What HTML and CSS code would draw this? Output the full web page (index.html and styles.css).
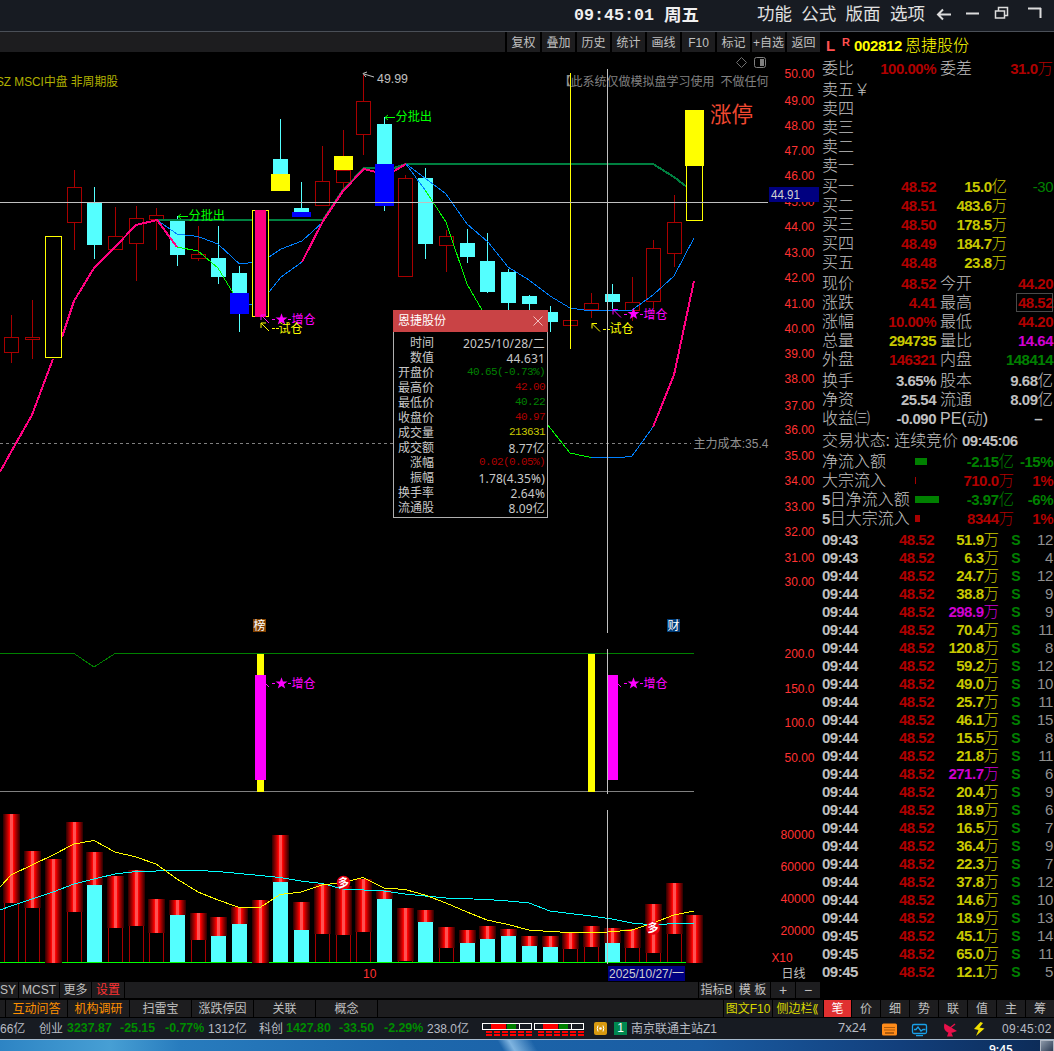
FILE: index.html
```
<!DOCTYPE html>
<html lang="zh-CN">
<head>
<meta charset="utf-8">
<title>恩捷股份 002812</title>
<link rel="stylesheet" href="styles.css">
</head>
<body>
<header class="titlebar">
  <div class="clock"><span class="clock-time">09:45:01</span><span class="clock-day">周五</span></div>
  <nav class="menu"><span>功能</span><span>公式</span><span>版面</span><span>选项</span></nav>
  <svg class="winbtns" width="119" height="31" viewBox="935 0 119 31" fill="none" stroke="#dcdcdc" stroke-width="2">
    <path d="M951 14.500H938M943 9.500L938 14.500L943 19.500M966 13.500H979"/>
    <path stroke-width="1.500" d="M998.500 10.500V7.500H1007.500V15.500H1005M995.500 11H1004.500V18H995.500Z"/>
    <path stroke-width="2" d="M1028 8.500H1041M1040.500 8V18"/>
  </svg>
</header>
<main class="main">
  <section class="left">
    <div class="toolbar"><i class="fill"></i><b>复权</b><b>叠加</b><b>历史</b><b>统计</b><b>画线</b><b>F10</b><b>标记</b><b>+自选</b><b>返回</b></div>
    <div class="chart-wrap">
      <svg id="chart" width="820" height="930" viewBox="0 52 820 930">
        <defs>
          <linearGradient id="vol" x1="0" x2="1" y1="0" y2="0">
            <stop offset="0" stop-color="#2a0000"/><stop offset=".22" stop-color="#a00000"/><stop offset=".38" stop-color="#ff0000"/>
            <stop offset=".42" stop-color="#ff5050"/><stop offset=".58" stop-color="#ff5050"/><stop offset=".62" stop-color="#ff0000"/>
            <stop offset=".78" stop-color="#a00000"/><stop offset="1" stop-color="#2a0000"/>
          </linearGradient>
        </defs>
      </svg>
      <div class="tip">
        <div class="tip-head"><span>恩捷股份</span><svg width="10" height="10" viewBox="0 0 10 10"><path d="M.5.5L9.500 9.500M9.500.5L.5 9.500" stroke="#f0c0c0" stroke-width="1"/></svg></div>
        <dl class="tip-body">
          <dt>时间</dt><dd>2025/10/28/二</dd>
          <dt>数值</dt><dd>44.631</dd>
          <dt>开盘价</dt><dd class="mono green">40.65(-0.73%)</dd>
          <dt>最高价</dt><dd class="mono red">42.00</dd>
          <dt>最低价</dt><dd class="mono green">40.22</dd>
          <dt>收盘价</dt><dd class="mono red">40.97</dd>
          <dt>成交量</dt><dd class="mono yellow">213631</dd>
          <dt>成交额</dt><dd>8.77亿</dd>
          <dt>涨幅</dt><dd class="mono red">0.02(0.05%)</dd>
          <dt>振幅</dt><dd>1.78(4.35%)</dd>
          <dt>换手率</dt><dd>2.64%</dd>
          <dt>流通股</dt><dd>8.09亿</dd>
        </dl>
      </div>
    </div>
    <div class="tabs tabs-a"><b class="sy">SY</b><b class="mcst">MCST</b><b class="more">更多</b><b class="set">设置</b><b class="fill"></b><b class="ind">指标B</b><b class="tpl">模 板</b><b class="pm">+</b><b class="pm">−</b></div>
  </section>
  <aside class="quote">
    <div class="q-head"><span class="q-l">L</span><sup>R</sup><span class="q-code">002812</span><span class="q-name">恩捷股份</span></div>
    <div id="quote"></div>
    <div id="ticks"></div>
  </aside>
</main>
<div class="tabs tabs-b">
  <b class="stub"></b><b class="w orange">互动问答</b><b class="w orange">机构调研</b><b class="w">扫雷宝</b><b class="w">涨跌停因</b><b class="w">关联</b><b class="w">概念</b><b class="fill"></b><b class="f10">图文F10</b><b class="side">侧边栏⟪</b>
  <b class="k on">笔</b><b class="k">价</b><b class="k">细</b><b class="k">势</b><b class="k">联</b><b class="k">值</b><b class="k">主</b><b class="k">筹</b>
</div>
<footer class="status">
  <span class="s-first">66亿</span><span class="s-n1">创业</span><em class="e1">3237.87</em><em class="e2">-25.15</em><em class="e3">-0.77%</em><span class="s-v1">1312亿</span>
  <span class="s-n2">科创</span><em class="e1">1427.80</em><em class="e2">-33.50</em><em class="e3">-2.29%</em><span class="s-v2">238.0亿</span>
  <svg class="meters" width="102" height="14" viewBox="482 1022 102 14"><g id="meters"></g></svg>
  <svg class="sig" width="13" height="13" viewBox="0 0 13 13"><rect width="13" height="13" rx="2" fill="#d89a10"/><circle cx="6.500" cy="6.500" r="1.300" fill="#fff"/><path d="M4 3.500Q2.500 6.500 4 9.500M9 3.500Q10.500 6.500 9 9.500" stroke="#fff" fill="none"/></svg>
  <span class="num">1</span><span class="host">南京联通主站Z1</span>
  <span class="s724">7x24</span>
  <svg class="icons" width="106" height="16" viewBox="881 1020 106 16">
    <rect x="882" y="1022.500" width="15" height="12" rx="1.500" fill="#ff8c1a"/><path d="M884.500 1026.500H895M884.500 1029H895" stroke="#5a2a00" stroke-dasharray="1 1"/><path d="M885 1032H894" stroke="#5a2a00"/>
    <g fill="none" stroke="#18a0e8" stroke-width="1.300"><rect x="912.500" y="1023.500" width="14" height="9" rx="1.500"/><path d="M914 1028.500H916L918 1026L921 1030L923 1028.500H925.500M916 1034.700H923"/></g>
    <path d="M944.500 1022.500C942.500 1029 947 1033 953 1031.500L957 1030ZM949 1030L947 1035.500H953L951 1031Z" fill="#e8104a"/><path d="M950 1027L955 1023" stroke="#e8104a" stroke-width="1.500"/>
    <path d="M980.500 1021L974 1028L978.500 1029L976 1035L984.500 1027.500L979.500 1026.500L983 1022Z" fill="#f0e000"/>
  </svg>
  <span class="s-time">09:45:02</span>
</footer>
<div class="taskbar"><span>9:45</span><i></i></div>
<script src="app.js"></script>
</body>
</html>
```
FILE: styles.css
```
* { box-sizing: border-box; }
html, body { margin: 0; background: #000; }
body {
  width: 1054px; height: 1051px; overflow: hidden; color: #c0c0c0;
  font: 400 12px/1 "Liberation Sans", "Noto Sans CJK SC", sans-serif;
  display: flex; flex-direction: column; white-space: nowrap;
}
b, em, i { font-style: normal; font-weight: inherit; }

.titlebar { height: 32px; flex: none; display: flex; background: #171b22; border-bottom: 1px solid #4a4f57; }
.clock { margin-left: 574px; width: 183px; display: flex; color: #f0f0f0; font-weight: 700; line-height: 31px; }
.clock-time { font-family: "Liberation Mono", monospace; font-size: 16.700px; width: 90px; }
.clock-day { font-size: 17.500px; line-height: 30px; }
.menu { width: 178px; display: flex; gap: 9.300px; font-size: 17.500px; font-weight: 400; line-height: 29px; color: #e0e0e0; }

.main { display: flex; height: 968px; flex: none; }
.left { width: 820px; display: flex; flex-direction: column; }
.toolbar { height: 20px; display: flex; gap: 2px; flex: none; }
.toolbar b, .toolbar i { background: #1d1d1f; width: 33px; text-align: center; line-height: 22px; overflow: hidden; }
.toolbar .fill { width: auto; flex: 1; }
.chart-wrap { position: relative; height: 930px; flex: none; }
#chart { display: block; shape-rendering: crispEdges; }
#chart text { white-space: pre; }

.tip { position: absolute; left: 393px; top: 258px; width: 155px; height: 208px; background: #000; border: 1px solid #b0b0b0; border-top: 0; }
.tip-head { height: 22px; margin: 0 -1px; padding: 0 5px; background: #c94345; color: #fff; display: flex; align-items: center; justify-content: space-between; }
.tip-body { margin: 4px 0 0; padding: 0 2px 0 4px; display: grid; grid-template-columns: 36px 1fr; grid-auto-rows: 15px; line-height: 15px; text-align: right; }
.tip-body dt, .tip-body dd { margin: 0; font-weight: 400; color: #c8c8c8; }
.tip-body dd { font-family: "Noto Sans", "Noto Sans CJK SC", sans-serif; letter-spacing: .15px; }
.tip-body dd.mono { font-family: "Liberation Mono", monospace; font-size: 11px; letter-spacing: -.6px; line-height: 13px; }
.tip-body dd.green, .green { color: #008000; }
.tip-body dd.red, .red { color: #b00000; }
.tip-body dd.yellow, .yellow { color: #c8c800; }

.tabs { display: flex; gap: 1px; flex: none; }
.tabs b { background: #1d1d1f; text-align: center; overflow: hidden; }
.tabs .fill { flex: 1; }
.tabs-a { height: 16px; line-height: 16px; }
.tabs-a .sy { width: 18px; text-align: left; }
.tabs-a .mcst { width: 40px; } .tabs-a .more { width: 31px; } .tabs-a .set { width: 32px; color: #ff3232; font-weight: 400; }
.tabs-a .ind { width: 35px; } .tabs-a .tpl { width: 35px; } .tabs-a .pm { width: 24px; font-size: 14px; }
.tabs-b { height: 18px; padding-bottom: 1px; line-height: 19px; }
.tabs-b .stub { width: 5px; } .tabs-b .w { width: 61px; }
.tabs-b .orange { color: #ff9000; font-weight: 400; }
.tabs-b .f10 { width: 48px; color: #d8d800; } .tabs-b .side { width: 50px; color: #d8d800; }
.tabs-b .k { width: 28px; } .tabs-b .k.on { background: #e03030; color: #fff; width: 27px; }

.quote { width: 234px; overflow: hidden; font-size: 16px; font-weight: 300; }
.q-head { height: 27px; display: flex; line-height: 27px; color: #ff0; }
.q-l { width: 22px; padding-left: 6px; color: #ff5050; font-size: 15px; font-weight: 700; }
.q-head sup { width: 12px; color: #ff5050; font-size: 11px; font-weight: 700; line-height: 20px; vertical-align: baseline; }
.q-code { width: 51px; font-size: 15px; font-weight: 700; letter-spacing: -.35px; }
.row { display: grid; height: 19px; line-height: 19px; align-items: center; grid-template-columns: 57px 59px 4px 46px 67px; padding-left: 0; }
.row > span { height: 19px; overflow: visible; }
.row .lab { padding-left: 2px; }
.gap { margin-top: 2px; }
.num-v { font-size: 15px; letter-spacing: -.5px; font-weight: 700; text-align: right; }
.num-v u { text-decoration: none; font-weight: 300; font-size: 15.500px; line-height: 1; letter-spacing: 0; }
.white { color: #c0c0c0; } .mag { color: #d000d0; }
.book { grid-template-columns: 57px 59px 71px 46px; }
.boxed { outline: 1px solid #4a4a4a; outline-offset: -1px; margin-left: 30px; }
.state { height: 19px; line-height: 19px; margin-top: 3px; padding-left: 2px; letter-spacing: -.1px; }
.state span { font-size: 15px; letter-spacing: -.55px; font-weight: 700; margin-left: 4px; }
.state { display: flex; }
.flow { grid-template-columns: 95px 24px 75px 39px; }
.flow .bar { height: 7px; display: block; }
.flow .lab b { font-weight: 700; font-size: 15px; letter-spacing: -.5px; }
#ticks { margin-top: 3px; }
.tick { display: grid; height: 18px; line-height: 18px; grid-template-columns: 57px 57px 65px 25px 29px; }
.tick > span { height: 18px; }
.tick .t { padding-left: 2px; text-align: left; }
.tick .s { font-weight: 700; color: #008000; font-size: 14px; text-align: center; padding-left: 9px; }
.tick .c { font-size: 15px; letter-spacing: -.4px; text-align: right; color: #909090; font-weight: 400; }

.status { height: 21px; flex: none; display: flex; align-items: center; background: #171b22; color: #b8bcc4; }
.status em { color: #008c00; font-weight: 700; font-size: 12.400px; }
.s-first { width: 39px; } .s-n1 { width: 28px; } .s-n2 { width: 27px; }
.status .e1 { width: 53px; } .status .e2 { width: 45px; } .status .e3 { width: 43px; }
.s-v1 { width: 51px; } .s-v2 { width: 55px; }
.meters { margin-right: 10px; }
.sig { margin-right: 7px; }
.num { width: 13px; height: 13px; margin-right: 4px; background: #008850; color: #fff; text-align: center; line-height: 13px; }
.host { width: 207px; }
.s724 { width: 43px; font-family: "Noto Sans", sans-serif; font-size: 12.500px; }
.icons { margin-right: 15px; }
.s-time { letter-spacing: .4px; }
.taskbar { height: 12px; flex: none; position: relative; border-top: 1px solid #a8bccf; overflow: hidden;
  background: linear-gradient(60deg, transparent 436px, #7fb4e0 446px, transparent 466px), linear-gradient(90deg, #2d84c4, #479fd4 110px, #287cbe 180px, #1d68ad 400px, #1a5ca2 700px, #123f7c 900px, #0c2a55); }
.taskbar span { position: absolute; left: 989px; top: 4px; color: #fff; font: 600 12px/1 "Open Sans", sans-serif; }
.taskbar i { position: absolute; right: 0; top: 0; width: 14px; height: 12px; background: linear-gradient(135deg, #8c98a8, #2c3c54); border: 1px solid #b0b8c4; }
```
FILE: app.js
```
const NS = 'http://www.w3.org/2000/svg';
const chart = document.getElementById('chart');

function el(name, attrs, parent = chart) {
  const node = document.createElementNS(NS, name);
  for (const k in attrs) node.setAttribute(k, attrs[k]);
  parent.appendChild(node);
  return node;
}
const rect = (x, y, w, h, fill, parent) => el('rect', { x, y, width: w, height: h, fill }, parent);
const box = (x, y, w, h, stroke, fill = 'none') => el('rect', { x, y, width: w, height: h, fill, stroke });
const line = (pts, stroke, w = 1, extra = {}) => el('polyline', { points: pts, fill: 'none', stroke, 'stroke-width': w, ...extra });
const text = (x, y, s, fill, size = 12, width, extra = {}) => {
  const a = { x, y, fill, 'font-size': size, ...extra };
  if (width) { a.textLength = width; a.lengthAdjust = 'spacingAndGlyphs'; }
  el('text', a).textContent = s;
};

const RED = '#a80000', CYAN = '#54ffff', PINK = '#ff0080', BLUE = '#0080ff', LIME = '#00ff00', GREEN = '#008040';
const X = [11.5, 32.5, 53.5, 74.5, 94.5, 115.5, 136.5, 156.5, 177.5, 198.5, 218.5, 239.5, 260.5, 280.5, 301.5, 322.5, 343.5,
  363.5, 384.5, 405.5, 425.5, 446.5, 467.5, 487.5, 508.5, 529.5, 550.5, 570.5, 591.5, 612.5, 632.5, 653.5, 674.5, 694.5];

/* index, kind, high, body top, body bottom, low */
const candles = [
  [0, 'r', 315, 337.5, 352.5, 363], [1, 'r', 300, 337.5, 339.5, 359], [3, 'r', 170, 187.5, 222.5, 250],
  [4, 'c', 187, 203, 245, 259], [5, 'r', 207, 236.5, 249.5, 249], [6, 'r', 206, 218.5, 243.5, 281],
  [7, 'r', 208, 215.5, 219.5, 250], [8, 'c', 216, 221, 255, 266], [9, 'r', 226, 254.5, 258.5, 261],
  [10, 'c', 226, 258, 277, 284], [11, 'c', 266, 273, 293, 332], [13, 'c', 119, 159, 174, 174],
  [14, 'c', 182, 208, 212, 212], [15, 'r', 146, 181.5, 205.5, 205], [16, 'r', 130, 170.5, 182.5, 190],
  [17, 'r', 75, 101.5, 134.5, 155], [18, 'c', 117, 124, 164, 211], [19, 'r', 175, 178.5, 276.5, 276],
  [20, 'c', 168, 178, 244, 259], [21, 'r', 230, 236.5, 245.5, 272], [22, 'c', 229, 243, 257, 263],
  [23, 'c', 233, 261, 292, 293], [24, 'c', 269, 272, 303, 310], [25, 'c', 295, 296, 304, 310],
  [26, 'c', 306, 312, 322, 332], [27, 'r', 320, 320.5, 325.5, 325], [28, 'r', 293, 303.5, 309.5, 318],
  [29, 'c', 284, 294, 302, 309], [30, 'r', 277, 302.5, 310.5, 321], [31, 'r', 240, 248.5, 301.5, 308],
  [32, 'r', 195, 222.5, 253.5, 267]];
for (const [i, kind, hi, top, bot, lo] of candles) {
  const x = X[i];
  if (kind === 'c') {
    rect(x - .5, hi, 1, lo - hi, CYAN);
    rect(x - 7.5, top, 15, bot - top, CYAN);
  } else {
    rect(x - .5, hi, 1, Math.max(0, top - hi), RED);
    rect(x - .5, bot, 1, Math.max(0, lo - bot), RED);
    box(x - 7, top, 14, bot - top, RED);
  }
}
text(-4, 85.5, 'SZ MSCI中盘 非周期股', '#b0b000', 12, 122);
text(559, 85.5, '【', '#909090', 12, 0, { 'font-weight': 700 });
text(570.5, 85.5, '此系统仅做模拟盘学习使用', '#808080', 12, 144);
text(720.5, 85.5, '不做任何', '#808080', 12, 48);

/* price indicators */
line('157,220 323,220 343,190 364,168 394,168 406,164 653,164 674,177 687,187', GREEN, 2);
line('157,220 177,234 198,236.5 218,244 239,263.5 245,263.5 252,262.5', BLUE);
line('269,257 281,249 302,241 323,222', BLUE);
line('249,304.500 252,304.500', BLUE);
line('269,292 281,277 302,262', BLUE);
line('0,472 11,452 32,415 53,359', PINK, 2);
line('62,337 74,301 94,268 115,247 136,225 157,220 177,247', PINK, 2);
line('177,247 198,251 218,268 233,293', LIME);
line('302,262 323,221 343,191 364,169 376,172 394,171 406,164', PINK, 2);
line('406,164 425,178 446,194 467,224 488,242 508,267 529,280 550,296 570,308 591,311 612,310.5 632,310 653,295 674,276 694,238', BLUE);
line('406,164 425,190', BLUE);
line('425,190 446,222 467,284 482,310', LIME);
line('547,424 570,453 591,457.5', LIME);
line('591,457.5 622,457.5 632,456 653,427', BLUE);
line('653,427 674,375 694,281', PINK, 2);

/* signal blocks */
box(45.5, 236.5, 16, 121, '#ff0', '#000');
rect(230, 293, 19, 21, '#00f');
box(252.5, 210.5, 16, 106, '#ff0', '#000');
rect(255, 210, 11, 107, PINK);
rect(271, 174, 19, 17, '#ff0');
rect(292, 212, 19, 5, '#00f');
rect(334, 156, 19, 14, '#ff0');
rect(375, 164, 19, 42, '#00f');
rect(570, 73, 1, 276, '#ff0');
rect(685, 110, 19, 56, '#ff0');
box(686.5, 165.500, 16, 55, '#ff0');

/* arrows and captions */
const aa = { 'shape-rendering': 'auto' };
line('188,216.500 178,216.500', LIME); line('181,214 178,216.500 181,219', LIME, 1, aa);
text(188.500, 219.500, '分批出', LIME, 12.200);
line('395,117.500 385,117.500', LIME); line('388,115 385,117.500 388,120', LIME, 1, aa);
text(395.500, 121, '分批出', LIME, 12.200);
line('374,77 364,74', '#c0c0c0', 1, aa); line('367,72 363,73.500 366,77', '#c0c0c0', 1, aa);
text(377, 83, '49.99', '#c0c0c0', 12.500, 31);
const diag = (x, y, c) => { line(`${x + 8},${y + 8} ${x},${y}`, c, 1, aa); line(`${x + 5},${y} ${x},${y} ${x},${y + 5}`, c, 1, aa); };
function add(x, y, full = true) {
  if (full) diag(x, y, '#f0f'); else line(`${x + 5},${y + 5} ${x + 8},${y + 8}`, '#f0f', 1, aa);
  rect(x + 11, y + 4, 3, 1, '#f0f');
  const cx = x + 20.500, cy = y + 4.500;
  let p = '';
  for (let k = 0; k < 10; k++) {
    const r = k % 2 ? 2.500 : 6.300, a = -Math.PI / 2 + k * Math.PI / 5;
    p += `${cx + r * Math.cos(a)},${cy + r * Math.sin(a)} `;
  }
  el('polygon', { points: p, fill: '#f0f', ...aa });
  rect(x + 27, y + 4, 3, 1, '#f0f');
  text(x + 30.500, y + 9, '增仓', '#f0f', 12);
}
const probe = (x, y) => { diag(x, y, '#ff0'); rect(x + 11, y + 5, 3, 1, '#ff0'); rect(x + 15, y + 5, 3, 1, '#ff0'); text(x + 17.500, y + 9.500, '试仓', '#ff0', 12); };
add(261, 315); probe(261, 323); add(613, 309.500); probe(592, 323.500);
text(710, 121.500, '涨停', '#f04830', 21.500, 43, { 'font-weight': 400 });
line('741.5,57.5 746.5,62.5 741.5,67.5 736.5,62.5 741.5,57.5', '#707070', 1, aa);
el('rect', { x: 754.5, y: 57.5, width: 11, height: 10, rx: 2, fill: 'none', stroke: '#808080', ...aa });
rect(760, 59, 4, 7, '#808080');

line('0,443.5 691,443.5', '#808080', 1, { 'stroke-dasharray': '3 3' });
text(693.5, 447.500, '主力成本:35.4', '#909090', 12, 75);
rect(253, 619, 13, 13, '#804000'); text(253.500, 630, '榜', '#fff', 12);
rect(667, 619, 13, 13, '#003c78'); text(667.500, 630, '财', '#fff', 12);

/* signal pane */
line('0,653.5 74,653.5 94,667 115,653.5 694,653.5', '#008000');
rect(0, 791, 694, 1, '#808080');
rect(257, 654, 7, 138, '#ff0'); rect(588, 654, 7, 138, '#ff0');
rect(255, 675, 11, 105, '#f0f');

/* top, gradient bottom, kind (r outline / c cyan / f full height) */
const vols = [[814, 903, 'r'], [851, 908, 'r'], [859, 963, 'f'], [822, 912, 'r'], [852, 885, 'c'], [876, 928, 'r'], [870, 926, 'r'],
  [899, 933, 'r'], [900, 915, 'c'], [913, 940, 'r'], [917, 936, 'c'], [907, 924, 'c'], [900, 963, 'f'], [835, 882, 'c'],
  [902, 930, 'c'], [884, 934, 'r'], [886, 935, 'r'], [879, 932, 'r'], [890, 899, 'c'], [908, 961, 'r'], [910, 922, 'c'],
  [927, 948, 'r'], [930, 943, 'c'], [926, 939, 'c'], [929, 936, 'c'], [936, 946, 'c'], [936, 947, 'c'], [933, 949, 'r'],
  [926, 947, 'r'], [928, 943, 'c'], [929, 948, 'r'], [904, 953, 'r'], [883, 934, 'r'], [915, 963, 'f']];
rect(0, 962, 686, 1, LIME);
vols.forEach(([top, mid, kind], i) => {
  const x = X[i];
  if (kind === 'r') box(x - 7, mid - 1.5, 14, 964 - mid, RED);
  if (kind === 'c') rect(x - 7.5, mid, 15, 962 - mid, CYAN);
  rect(x - 8.5, top, 17, mid - top, 'url(#vol)');
  if (kind === 'r') rect(x - 8.5, 962, 17, 1, LIME);
});
line('0,910 11,906 32,899 53,892 74,884 94,879 115,874 136,871.5 177,870.5 198,870.5 218,871.5 239,873.5 260,875.5 280,877.5 301,881 322,883.5 343,889 384,891 405,894 425,896 446,898 487,899.5 508,901 529,903 550,911 570,913.5 591,916 612,919 632,923 653,925 674,923.5 694,923.5', '#00ffff');
line('0,887 11,875 32,865 53,855 74,844 94,840.5 115,852 136,857 156,864 177,879 198,892 218,900 239,907.5 260,907.5 280,894.5 301,892 322,885 343,882.5 363,877.5 384,888 405,889.5 425,895 446,903 467,912 487,920 508,924.5 529,930 550,931.5 570,932.5 601,932.5 632,930 653,923 674,915 694,911', '#ffff00');
for (const [cx, cy] of [[343.5, 882.5], [653, 928]]) {
  el('circle', { cx, cy, r: 6.8, fill: '#e80010', ...aa });
  text(cx - 5.5, cy + 4.2, '多', '#fff', 11, 0, { 'font-weight': 700 });
}

/* crosshair */
rect(0, 202, 768, 1, '#c0c0c0');
rect(607, 69, 1, 564, '#c0c0c0'); rect(607, 649, 1, 145, '#c0c0c0'); rect(607, 810, 1, 154, '#c0c0c0');
rect(608, 675, 10, 105, '#f0f');
add(261, 679, false); add(613, 679, false);

/* axes */
const ys = [73, 100, 125, 150, 175, 201, 226, 252, 277, 303, 328, 353, 378, 405, 429, 455, 480, 506, 531, 557, 581];
ys.forEach((y, i) => text(784.500, y + 4.500, (50 - i) + '.00', '#ff3232', 12, 30));
rect(769, 187, 50, 15, '#000080'); text(771, 198.500, '44.91', '#d0d0d0', 12, 29);
[['200.0', 653.5], ['150.0', 688.5], ['100.0', 722.5], ['50.00', 757.5]].forEach(([s, y]) => text(784.500, y + 4.500, s, '#ff3232', 12, 30));
[['80000', 834.5], ['60000', 866.5], ['40000', 898.5], ['20000', 930.500]].forEach(([s, y]) => text(780.500, y + 4.500, s, '#ff3232', 12, 34));
text(771.500, 962, 'X10', '#ff3232', 12, 21);
text(781.500, 977.500, '日线', '#c0c0c0', 12);
text(363, 978, '10', '#ff3232', 12);
rect(608, 966, 77, 15, '#000080'); text(609, 977.500, '2025/10/27/一', '#d0d0d0', 12, 75);

/* quote panel */
const val = (s, cls) => `<span class="num-v ${cls}">${s.replace(/[亿万]/, m => `<u>${m}</u>`)}</span>`;
const pair = (a, av, ac, b, bv, bc, more = '') =>
  `<div class="row ${more}"><span class="lab">${a}</span>${val(av, ac)}<span></span><span>${b}</span>${val(bv, bc)}</div>`;
const book = (a, p, v, d, more = '') =>
  `<div class="row book ${more}"><span class="lab">${a}</span>${val(p, 'red')}${val(v, 'yellow')}<span class="num-v green" style="font-weight:400">${d}</span></div>`;
const flow = (a, w, c, v, p, more = '') =>
  `<div class="row flow ${more}"><span class="lab">${a}</span><i class="bar" style="width:${w}px;background:${c === 'red' ? RED : '#008000'}"></i>${val(v, c)}${val(p, c)}</div>`;
document.getElementById('quote').innerHTML =
  pair('委比', '100.00%', 'red', '委差', '31.0万', 'red') +
  book('卖五￥', '', '', '', 'gap') + book('卖四', '', '', '') + book('卖三', '', '', '') + book('卖二', '', '', '') + book('卖一', '', '', '') +
  book('买一', '48.52', '15.0亿', '-30', 'gap') + book('买二', '48.51', '483.6万', '') + book('买三', '48.50', '178.5万', '') +
  book('买四', '48.49', '184.7万', '') + book('买五', '48.48', '23.8万', '') +
  pair('现价', '48.52', 'red', '今开', '44.20', 'red', 'gap') + pair('涨跌', '4.41', 'red', '最高', '48.52', 'red boxed') +
  pair('涨幅', '10.00%', 'red', '最低', '44.20', 'red') + pair('总量', '294735', 'yellow', '量比', '14.64', 'mag') +
  pair('外盘', '146321', 'red', '内盘', '148414', 'green') +
  pair('换手', '3.65%', 'white', '股本', '9.68亿', 'white', 'gap') + pair('净资', '25.54', 'white', '流通', '8.09亿', 'white') +
  pair('收益㈢', '-0.090', 'white', 'PE(动)', '–&nbsp;&nbsp;&nbsp;', 'white') +
  '<div class="state">交易状态: 连续竞价<span>09:45:06</span></div>' +
  flow('净流入额', 12, 'green', '-2.15亿', '-15%', 'gap') + flow('大宗流入', 1, 'red', '710.0万', '1%') +
  flow('<b>5</b>日净流入额', 24, 'green', '-3.97亿', '-6%') + flow('<b>5</b>日大宗流入', 5, 'red', '8344万', '1%');

const ticks = [['09:43', 51.9, 12], ['09:43', 6.3, 4], ['09:44', 24.7, 12], ['09:44', 38.8, 9], ['09:44', 298.9, 9], ['09:44', 70.4, 11],
  ['09:44', 120.8, 8], ['09:44', 59.2, 12], ['09:44', 49, 10], ['09:44', 25.7, 11], ['09:44', 46.1, 15], ['09:44', 15.5, 8],
  ['09:44', 21.8, 11], ['09:44', 271.7, 6], ['09:44', 20.4, 9], ['09:44', 18.9, 6], ['09:44', 16.5, 7], ['09:44', 36.4, 9],
  ['09:44', 22.3, 7], ['09:44', 37.8, 12], ['09:44', 14.6, 10], ['09:44', 18.9, 13], ['09:45', 45.1, 14], ['09:45', 65, 11], ['09:45', 12.1, 5]];
document.getElementById('ticks').innerHTML = ticks.map(([t, v, c]) =>
  `<div class="tick">${val(t, 't white')}${val('48.52', 'red')}${val(v.toFixed(1) + '万', v > 200 ? 'mag' : 'yellow')}<span class="s">S</span><span class="c">${c}</span></div>`).join('');

/* market breadth meters in the status bar */
const m = document.getElementById('meters');
for (const x of [482, 534]) {
  el('rect', { x: x + .5, y: 1023.5, width: 49, height: 6, fill: 'none', stroke: '#fff' }, m);
  rect(x + 9, 1024, 15, 5, '#f00', m); rect(x + 25, 1024, 9, 5, '#008000', m); rect(x + 37, 1024, 1, 5, '#fff', m);
  for (let k = 0; k < 6; k++) for (const y of [1031, 1034]) rect(x + 4 + k * 8, y, 6, 2, '#f00', m);
}
```
